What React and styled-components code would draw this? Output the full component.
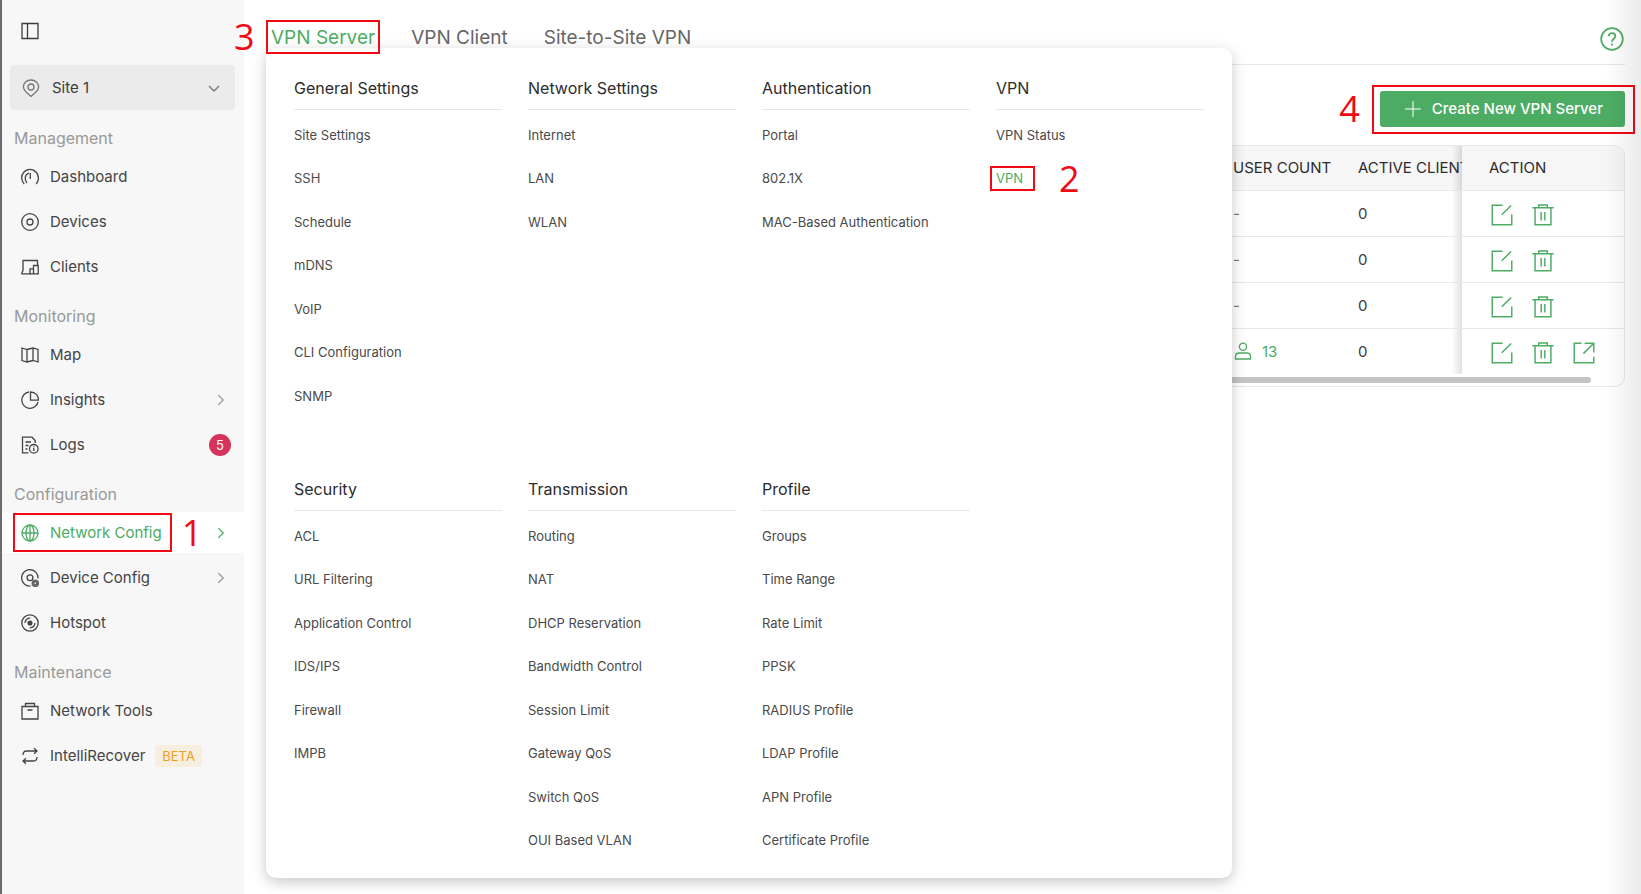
import React from "react";
import styled, { createGlobalStyle } from "styled-components";

const GlobalStyle = createGlobalStyle`
  * {
    box-sizing: border-box;
  }
  body {
    margin: 0;
    background: #fff;
    color: #3c3c3c;
    font-family: Inter, "Liberation Sans", sans-serif;
    font-size: 15px;
  }
  a {
    color: inherit;
    text-decoration: none;
  }
  button {
    font: inherit;
    color: inherit;
    background: none;
    border: 0;
    padding: 0;
    cursor: pointer;
  }
  ul {
    list-style: none;
    margin: 0;
    padding: 0;
  }
`;

const icons = {
  panel: (
    <>
      <path d="M1 1.500h16v15H1zM6.500 1.500v15" />
    </>
  ),
  pin: (
    <>
      <path d="M9 17.400C6 14.800 1.400 12 1.400 7.800 1.400 3.900 4.600 1 9 1s7.600 2.900 7.600 6.800c0 4.200-4.600 7-7.600 9.600z" />
      <circle cx="9" cy="8" r="3" />
    </>
  ),
  dashboard: (
    <>
      <path d="M3.200 16C0 12.500-.2 7.600 2.800 4.200c3.300-3.800 9.100-3.800 12.400 0 3 3.500 3 8.400 0 11.800" />
      <path d="M5.800 15C3.300 11.500 3.500 6.500 8 5.200M9.300 5v6" />
    </>
  ),
  devices: (
    <>
      <circle cx="9" cy="9" r="8.300" />
      <circle cx="9" cy="9" r="3" />
    </>
  ),
  clients: (
    <>
      <path d="M2 13V2.500h14.500V7M.3 15.800h9.200M2 12.500l-1.400 3" />
      <path d="M12.500 7.500h4.700v8.300h-4.700zM9 15.800v-5h3.500M9 15.800h3.500" />
    </>
  ),
  map: (
    <path d="M1 2l5 1.500L12 2l5 1.500V16l-5-1.500L6 16l-5-1.500zM6 3.500V16M12 2v12.500" />
  ),
  insights: (
    <>
      <path d="M8 1A8.200 8.200 0 1 0 17 11" />
      <path d="M9.500 1v8.200h8C17.500 4.500 14.500 1 9.500 1z" />
    </>
  ),
  logs: (
    <>
      <path d="M7.500 16.800H1.500V1.200h9.500l3.200 3.300V7M4.500 6h5.500M4.500 9.500h3M4.500 13h2" />
      <circle cx="12.800" cy="12.800" r="4.300" />
      <path d="M12.800 12v3M12.800 10.300v1" />
    </>
  ),
  globe: (
    <>
      <circle cx="9" cy="9" r="8" />
      <ellipse cx="9" cy="9" rx="4" ry="8" />
      <path d="M1 9h16M9 1v16" />
    </>
  ),
  deviceConfig: (
    <>
      <path d="M9.500 17A8.200 8.200 0 1 1 17 9.500" />
      <circle cx="9" cy="8.800" r="2.900" />
      <circle cx="14.300" cy="14.300" r="2.300" strokeWidth="3" opacity=".8" />
    </>
  ),
  hotspot: (
    <>
      <circle cx="9" cy="9" r="8.200" />
      <circle cx="9" cy="9" r="1.900" fill="currentColor" />
      <path d="M4 9c0-3 2.400-5 5.200-4.800M14 9c0 3-2.400 5-5.200 4.800" />
    </>
  ),
  tools: <path d="M1 4.500h16v12.500H1zM4.500 4.500v-3h9v3M6.500 8h5" />,
  recover: (
    <>
      <path d="M2 8c0-2.500 1-4 3.500-4H16M13 1.200L16 4l-3 2.700" />
      <path d="M16 10c0 2.500-1 4-3.500 4H2M5 11.300L2 14l3 2.800" />
    </>
  ),
  down: <path d="M4 7l5 5 5-5" />,
  right: <path d="M6 3.500l5.500 5.500L6 14.500" />,
  plus: <path d="M9 1v16M1 9h16" />,
  help: (
    <>
      <circle cx="9" cy="9" r="8.100" />
      <path d="M6.500 7c0-3.200 5-3.200 5 0 0 1.800-2.500 1.900-2.500 4M9 12.300v1.500" />
    </>
  ),
  edit: <path d="M9.500 1H1v16h16V8.500M16.500 1.300L8.800 8.800" />,
  trash: (
    <path d="M.3 3h17.400M2.500 3v14h13V3M5.500 3V.8h7V3M7.500 6.500v7M10.500 6.500v7" />
  ),
  open: <path d="M7 1H1v16h16v-5M9.500 1H17v7.500M17 1L8.500 9.500" />,
  user: (
    <>
      <circle cx="9" cy="4.800" r="3.600" />
      <path d="M1.500 17v-2.500c0-2.500 1.500-3.500 4-3.500h7c2.500 0 4 1 4 3.500V17z" />
    </>
  ),
};

const Icon = ({ name, size = 18, stroke = 1.3 }) => (
  <Svg
    width={size}
    height={size}
    viewBox="0 0 18 18"
    strokeWidth={stroke}
    aria-hidden="true"
  >
    {icons[name]}
  </Svg>
);

const groups = [
  {
    title: "Management",
    items: [
      { label: "Dashboard", icon: "dashboard" },
      { label: "Devices", icon: "devices" },
      { label: "Clients", icon: "clients" },
    ],
  },
  {
    title: "Monitoring",
    items: [
      { label: "Map", icon: "map" },
      { label: "Insights", icon: "insights", arrow: true },
      { label: "Logs", icon: "logs", count: 5 },
    ],
  },
  {
    title: "Configuration",
    items: [
      { label: "Network Config", icon: "globe", arrow: true, step: 1 },
      { label: "Device Config", icon: "deviceConfig", arrow: true },
      { label: "Hotspot", icon: "hotspot" },
    ],
  },
  {
    title: "Maintenance",
    items: [
      { label: "Network Tools", icon: "tools" },
      { label: "IntelliRecover", icon: "recover", beta: true },
    ],
  },
];

const menu = [
  {
    title: "General Settings",
    links: [
      "Site Settings",
      "SSH",
      "Schedule",
      "mDNS",
      "VoIP",
      "CLI Configuration",
      "SNMP",
    ],
  },
  { title: "Network Settings", links: ["Internet", "LAN", "WLAN"] },
  {
    title: "Authentication",
    links: ["Portal", "802.1X", "MAC-Based Authentication"],
  },
  { title: "VPN", links: ["VPN Status", "VPN"] },
  {
    title: "Security",
    links: [
      "ACL",
      "URL Filtering",
      "Application Control",
      "IDS/IPS",
      "Firewall",
      "IMPB",
    ],
  },
  {
    title: "Transmission",
    links: [
      "Routing",
      "NAT",
      "DHCP Reservation",
      "Bandwidth Control",
      "Session Limit",
      "Gateway QoS",
      "Switch QoS",
      "OUI Based VLAN",
    ],
  },
  {
    title: "Profile",
    links: [
      "Groups",
      "Time Range",
      "Rate Limit",
      "PPSK",
      "RADIUS Profile",
      "LDAP Profile",
      "APN Profile",
      "Certificate Profile",
    ],
  },
];

const servers = [
  { id: 1, users: null, active: 0 },
  { id: 2, users: null, active: 0 },
  { id: 3, users: null, active: 0 },
  { id: 4, users: 13, active: 0 },
];

const Sidebar = () => (
  <Aside>
    <Toggle aria-label="Collapse sidebar">
      <Icon name="panel" />
    </Toggle>
    <SitePicker>
      <Icon name="pin" />
      <span>Site 1</span>
      <Icon name="down" />
    </SitePicker>
    {groups.map(({ title, items }) => (
      <Group key={title}>
        <h2>{title}</h2>
        <ul>
          {items.map(({ label, icon, arrow, count, beta, step }) => (
            <li key={label}>
              <NavLink href="#" $active={step}>
                <NavName $marked={step}>
                  <Icon name={icon} />
                  <span>{label}</span>
                </NavName>
                {beta && <Beta>BETA</Beta>}
                {step && <Step>{step}</Step>}
                {arrow && (
                  <Arrow $active={step}>
                    <Icon name="right" size={16} stroke={1.5} />
                  </Arrow>
                )}
                {count && <Count>{count}</Count>}
              </NavLink>
            </li>
          ))}
        </ul>
      </Group>
    ))}
  </Aside>
);

const MegaMenu = () => (
  <Menu>
    {menu.map(({ title, links }) => (
      <section key={title}>
        <h3>{title}</h3>
        <ul>
          {links.map((link) => {
            const current = link === "VPN";
            return (
              <li key={link}>
                <MenuLink href="#" $current={current}>
                  {link}
                </MenuLink>
                {current && <Step>2</Step>}
              </li>
            );
          })}
        </ul>
      </section>
    ))}
  </Menu>
);

const ServerTable = () => (
  <TableBox>
    <Table>
      <thead>
        <tr>
          <td />
          <UserCol>USER COUNT</UserCol>
          <ClientCol>ACTIVE CLIENT</ClientCol>
          <ActionCol>ACTION</ActionCol>
        </tr>
      </thead>
      <tbody>
        {servers.map(({ id, users, active }) => (
          <tr key={id}>
            <td />
            <td>
              {users ? (
                <Users href="#">
                  <Icon name="user" />
                  {users}
                </Users>
              ) : (
                <Empty>-</Empty>
              )}
            </td>
            <ActiveCell>{active}</ActiveCell>
            <td>
              <Actions>
                <button aria-label="Edit">
                  <Icon name="edit" size={22} stroke={1.2} />
                </button>
                <button aria-label="Delete">
                  <Icon name="trash" size={22} stroke={1.2} />
                </button>
                {users && (
                  <button aria-label="Open">
                    <Icon name="open" size={22} stroke={1.2} />
                  </button>
                )}
              </Actions>
            </td>
          </tr>
        ))}
      </tbody>
    </Table>
    <Scrollbar />
  </TableBox>
);

const App = () => {
  return (
    <Page>
      <GlobalStyle />
      <Sidebar />
      <Main>
        <TopBar>
          <Tabs>
            <TopStep>3</TopStep>
            <Tab href="#" $active>
              VPN Server
            </Tab>
            <Tab href="#">VPN Client</Tab>
            <Tab href="#">Site-to-Site VPN</Tab>
          </Tabs>
          <Help aria-label="Help">
            <Icon name="help" size={24} />
          </Help>
        </TopBar>
        <Toolbar>
          <Step>4</Step>
          <Marked>
            <CreateButton>
              <Icon name="plus" stroke={1} />
              Create New VPN Server
            </CreateButton>
          </Marked>
        </Toolbar>
        <ServerTable />
        <MegaMenu />
        <EdgeShade />
      </Main>
    </Page>
  );
};

const Svg = styled.svg`
  display: block;
  flex: none;
  fill: none;
  stroke: currentColor;
`;

const Page = styled.div`
  display: flex;
  min-height: 100vh;
`;

const Aside = styled.aside`
  flex: none;
  width: 244px;
  padding-top: 22px;
  background: #f7f7f7;
  border-left: 2px solid #6c6c6c;
`;

const Toggle = styled.button`
  display: block;
  margin: 0 0 25px 19px;
`;

const SitePicker = styled.button`
  display: flex;
  align-items: center;
  width: 225px;
  height: 45px;
  margin-left: 8px;
  padding: 0 12px;
  border-radius: 4px;
  background: #ebebeb;
  color: #777;

  span {
    flex: 1;
    margin-left: 12px;
    text-align: left;
    color: #3c3c3c;
  }
`;

const Group = styled.nav`
  padding-top: 16px;

  & + & {
    padding-top: 17px;
  }

  h2 {
    margin: 0 0 6px 12px;
    font-size: 16px;
    font-weight: 400;
    line-height: 24px;
    color: #999;
  }

  ul {
    display: grid;
    gap: 4px;
  }
`;

const NavLink = styled.a`
  display: flex;
  align-items: center;
  height: 41px;
  padding: 0 15px 0 11px;
  background: ${({ $active }) => ($active ? "#fff" : "none")};
  color: ${({ $active }) => ($active ? "#4cac64" : "#444")};
`;

const NavName = styled.span`
  display: flex;
  align-items: center;
  gap: 11px;
  height: 39px;
  padding: 0 8px 0 6px;
  border: 2px solid ${({ $marked }) => ($marked ? "#f00a14" : "transparent")};
`;

const Step = styled.b`
  font-family: "Open Sans", "Noto Sans", sans-serif;
  font-size: 36px;
  font-weight: 400;
  line-height: 40px;
  color: #f00a14;

  ${NavLink} & {
    margin-left: 10px;
  }
`;

const TopStep = styled(Step)`
  width: 32px;
  margin-left: -32px;
`;

const Arrow = styled.span`
  margin-left: auto;
  color: ${({ $active }) => ($active ? "#4cac64" : "#999")};
`;

const Beta = styled.span`
  padding: 0 7px;
  border-radius: 3px;
  background: #f7eedf;
  color: #eda020;
  font-size: 13px;
  line-height: 22px;
`;

const Count = styled.span`
  width: 22px;
  margin: 0 -2px 0 auto;
  border-radius: 50%;
  background: #d6335c;
  color: #fff;
  font-size: 13px;
  line-height: 22px;
  text-align: center;
`;

const Main = styled.main`
  position: relative;
  flex: 1;
  min-width: 0;
  padding: 0 16px 0 22px;
`;

const TopBar = styled.header`
  display: flex;
  align-items: flex-start;
  justify-content: space-between;
  height: 65px;
  border-bottom: 1px solid #e8e8e8;
`;

/* sits above the menu so the tab outline is not covered */
const Tabs = styled.nav`
  position: relative;
  z-index: 1;
  display: flex;
  padding-top: 17px;
`;

const Tab = styled.a`
  height: 34px;
  margin: 3px 26px 0 0;
  padding: 0 3px;
  border: 2px solid ${({ $active }) => ($active ? "#f00a14" : "transparent")};
  font-size: 19px;
  line-height: 32px;
  color: ${({ $active }) => ($active ? "#4cac64" : "#666")};
`;

const Help = styled.button`
  margin: 27px 1px 0 0;
  color: #4cac64;
`;

const Toolbar = styled.div`
  display: flex;
  justify-content: flex-end;
  align-items: center;
  gap: 12px;
  height: 80px;
  margin-right: -10px;
  padding-top: 8px;
`;

const Marked = styled.div`
  padding: 4px 8px 5px 6px;
  border: 2px solid #f00a14;
`;

const CreateButton = styled.button`
  display: flex;
  align-items: center;
  gap: 10px;
  height: 36px;
  padding: 0 22px 0 24px;
  border-radius: 3px;
  background: #4cac64;
  color: #fff;
  font-weight: 500;
`;

const TableBox = styled.div`
  overflow: hidden;
  border: 1px solid #e8e8e8;
  border-radius: 10px;
`;

const Table = styled.table`
  width: 100%;
  table-layout: fixed;
  border-collapse: collapse;

  th,
  td {
    height: 46px;
    padding: 0;
    border-bottom: 1px solid #e8e8e8;
    font-weight: 400;
    text-align: left;
    white-space: nowrap;
  }

  thead th,
  thead td {
    height: 44px;
    background-color: #f6f6f6;
    color: #2c2c2c;
  }

  tbody tr:last-child td {
    border-bottom: 0;
  }
`;

const UserCol = styled.th`
  width: 125px;
`;

const pinnedShadow = `
  background-image: linear-gradient(
    to left,
    rgba(0, 0, 0, 0.12),
    rgba(0, 0, 0, 0) 10px
  );
`;

const ClientCol = styled.th`
  width: 104px;
  overflow: hidden;
  ${pinnedShadow}
`;

const ActiveCell = styled.td`
  ${pinnedShadow}
`;

const ActionCol = styled.th`
  width: 162px;

  ${Table} thead & {
    padding-left: 27px;
  }
`;

const Actions = styled.div`
  display: flex;
  gap: 19px;
  padding: 3px 0 0 29px;
  color: #4cac64;
`;

const Users = styled.a`
  display: flex;
  align-items: center;
  gap: 10px;
  padding-left: 1px;
  color: #4cac64;
`;

const Empty = styled.span`
  color: #777;
`;

const Scrollbar = styled.div`
  height: 6px;
  margin: 3px 33px 3px 0;
  border-radius: 3px;
  background: #c4c4c4;
`;

const Menu = styled.div`
  position: absolute;
  top: 48px;
  left: 22px;
  display: grid;
  grid-template-columns: repeat(4, 208px);
  gap: 50px 26px;
  padding: 19px 28px 16px;
  border-radius: 10px;
  background: #fff;
  box-shadow: 0 4px 14px rgba(0, 0, 0, 0.22);

  h3 {
    height: 43px;
    margin: 0 0 3px;
    border-bottom: 1px solid #e6e6e6;
    font-size: 16px;
    font-weight: 400;
    line-height: 42px;
    color: #2c2c2c;
  }

  li {
    display: flex;
    align-items: center;
    gap: 24px;
    height: 44px;
  }

  li:nth-child(even) {
    height: 43px;
  }
`;

const MenuLink = styled.a`
  margin-left: -6px;
  padding: 0 ${({ $current }) => ($current ? "10px" : "4px")} 0 4px;
  border: 2px solid ${({ $current }) => ($current ? "#f00a14" : "transparent")};
  font-size: 13px;
  line-height: 21px;
  color: ${({ $current }) => ($current ? "#4cac64" : "#4a4a4a")};
`;

const EdgeShade = styled.div`
  position: absolute;
  top: 0;
  right: 0;
  bottom: 0;
  width: 36px;
  background: linear-gradient(to right, rgba(0, 0, 0, 0), rgba(0, 0, 0, 0.08));
  pointer-events: none;
`;

export default App;
